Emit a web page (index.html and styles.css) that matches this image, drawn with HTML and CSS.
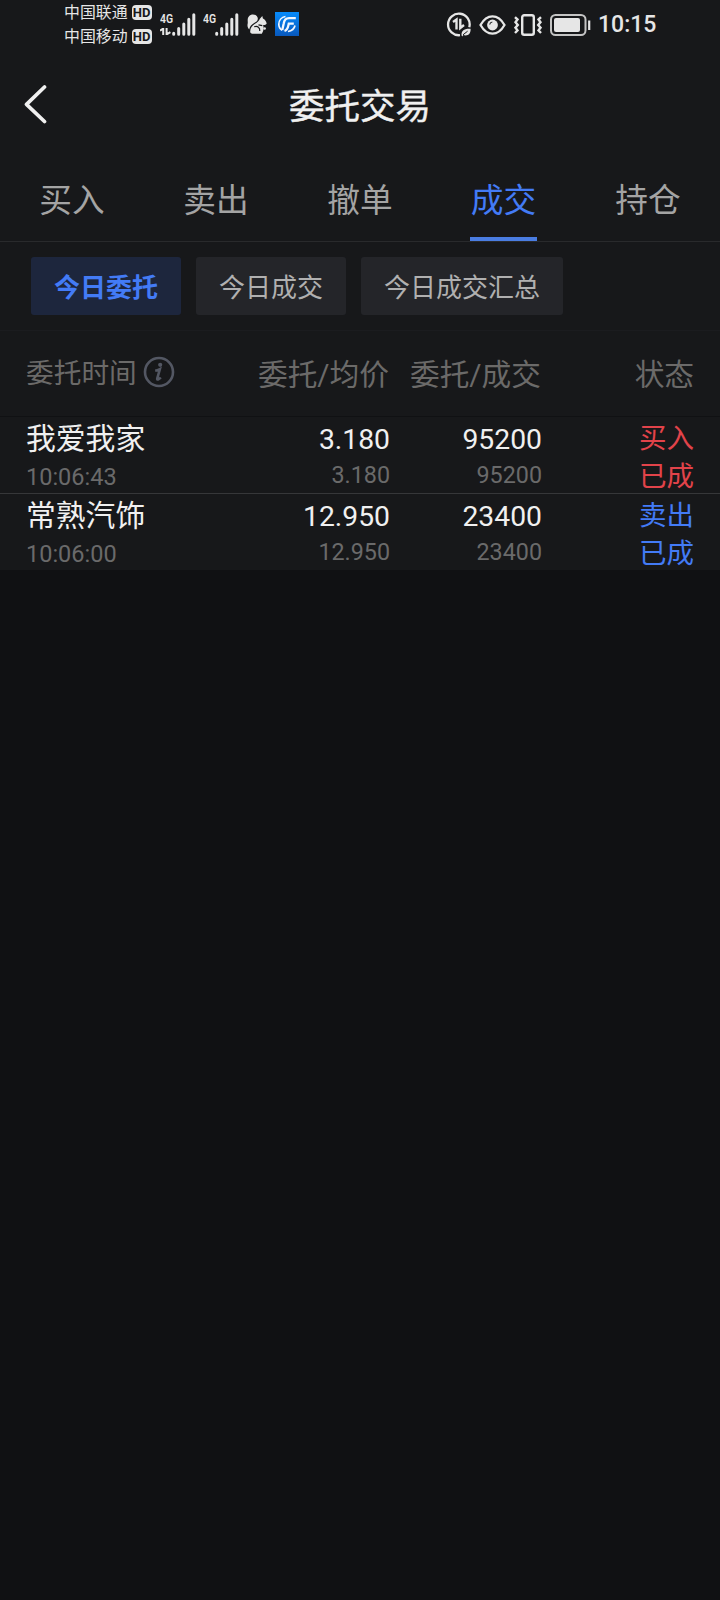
FILE: index.html
```html
<!DOCTYPE html>
<html lang="zh-CN">
<head>
<meta charset="utf-8">
<title>委托交易</title>
<link rel="stylesheet" href="styles.css">
</head>
<body>
<div class="statusbar">
  <div class="carriers">
    <div class="carrier"><span>中国联通</span><b class="hd">HD</b></div>
    <div class="carrier"><span>中国移动</span><b class="hd">HD</b></div>
  </div>
  <div class="signal">
    <div class="net"><span>4G</span>
      <svg width="11" height="7" viewBox="0 0 11 7"><path d="M0 2.600 3.200 .6V7M6.600 0V6.400L10.400 4.200" fill="none" stroke="#e6e6e6" stroke-width="2"/></svg>
    </div>
    <svg class="bars" width="24" height="23" viewBox="0 0 24 23"><path d="M1.700 20.200V21.200M6.700 15.500V21.200M11.800 11V21.200M16.800 6.200V21.200M21.800 1.700V21.200" stroke="#e6e6e6" stroke-width="3" stroke-linecap="round"/></svg>
  </div>
  <div class="signal second">
    <div class="net"><span>4G</span></div>
    <svg class="bars" width="24" height="23" viewBox="0 0 24 23"><path d="M1.700 20.200V21.200M6.700 15.500V21.200M11.800 11V21.200M16.800 6.200V21.200M21.800 1.700V21.200" stroke="#e6e6e6" stroke-width="3" stroke-linecap="round"/></svg>
  </div>
  <svg class="squirrel" width="20" height="20" viewBox="0 0 20 20">
    <path d="M2.200 15.500C.8 14 .2 12 .6 10 1 8.500.6 7.500.7 5.500.9 2.500 3 .4 5.800.4c3 0 5.200 2 5 4.500-.2 2.300-2 3-4 4.300C4.300 10.800 2.800 12.500 2.200 15.500z" fill="#e6e6e6"/>
    <path d="M3.200 18.300C3 14 5 11.500 8 9.700c2.500-1.500 4-2.700 4.900-5L15.300 2l.6 2.400c2 .8 3.200 2.600 3.800 5-.8 1.400-2.100 1.700-3.600 1.600.8 2.500.6 5.800-1.300 8.700H5.200c-.9 0-1.600-.5-2-1.400z" fill="#e6e6e6"/>
    <path d="M7.200 12.800c3.500-1.200 5.800.8 5.600 4.200M11.500 10.800l3.800.8" fill="none" stroke="#17181a" stroke-width="1.200"/>
    <circle cx="17.600" cy="14.500" r="1.300" fill="#e6e6e6"/>
  </svg>
  <svg class="app" width="24" height="24" viewBox="0 0 24 24">
    <defs><linearGradient id="sky" x1="0" y1="0" x2="0" y2="1"><stop offset="0" stop-color="#078bfb"/><stop offset="1" stop-color="#0858bd"/></linearGradient></defs>
    <rect width="24" height="24" fill="url(#sky)"/>
    <path d="M10.500 4.500C6.500 5.200 3.800 8.500 3.800 12.300c0 2.800 1.300 4.800 3.400 6.100M13 19.500c3.800-.6 6.300-2.700 7-6" fill="none" stroke="#f2f7ff" stroke-width="1.700"/>
    <path d="M20.800 6.200H14C10.500 6.200 9.300 8 8.700 11.500L7.300 18" fill="none" stroke="#f2f7ff" stroke-width="2.300"/>
    <path d="M18.800 11.600H13.800C12.900 15.500 12.800 18 9.500 19" fill="none" stroke="#f2f7ff" stroke-width="2.300"/>
  </svg>
  <div class="right">
    <svg width="25" height="25" viewBox="0 0 25 25">
      <path d="M23.300 15.200A10.800 10.800 0 1 0 14 23.200" fill="none" stroke="#e6e6e6" stroke-width="2.300"/>
      <path d="M7 10 10.500 7.500V17.500M14.300 6.800V16L18 13" fill="none" stroke="#e6e6e6" stroke-width="2.400"/>
      <path d="M15.600 23.500c-.6-4.600 2.600-7.300 9-6.800.3 5-2.800 7.800-7.200 6.300l-1.200 1.500z" fill="#e6e6e6"/>
      <path d="M17 22.800l4.600-3.600" stroke="#17181a"/>
    </svg>
    <svg class="eye" width="27" height="20" viewBox="0 0 27 20">
      <path d="M1.500 10C8-1.500 19-1.500 25.500 10 19 21.500 8 21.500 1.500 10z" fill="none" stroke="#e6e6e6" stroke-width="2.300"/>
      <circle cx="13.500" cy="10" r="5.400" fill="#e6e6e6"/><path d="M10.700 9.500A3 3 0 0 1 13.300 7" fill="none" stroke="#17181a" stroke-width="1.100"/>
    </svg>
    <svg class="vibrate" width="28" height="22" viewBox="0 0 28 22">
      <rect x="8.200" y="1.200" width="11.600" height="19.600" rx="2" fill="none" stroke="#e6e6e6" stroke-width="2.400"/>
      <path d="M1 3.200 3.500 5.500 1.500 8.200 3.800 11 1.500 13.700 3.500 16.400 1 19M27 3.200 24.500 5.500 26.500 8.200 24.200 11 26.500 13.700 24.500 16.400 27 19" fill="none" stroke="#e6e6e6" stroke-width="2.400"/>
    </svg>
    <svg class="battery" width="41" height="22" viewBox="0 0 41 22">
      <rect x="1" y="1" width="34.500" height="20" rx="4.500" fill="none" stroke="#c4c4c4" stroke-width="2"/>
      <rect x="4" y="4" width="26" height="14" rx="2" fill="#e6e6e6"/>
      <path d="M39.200 6.500V16" stroke="#e6e6e6" stroke-width="2.200"/>
    </svg>
    <span class="clock">10:15</span>
  </div>
</div>

<header class="titlebar">
  <svg class="back" width="24" height="40" viewBox="0 0 24 40"><path d="M20.500 2 2.500 19.300 20.500 36.500" fill="none" stroke="#f0f0f0" stroke-width="3.700" stroke-linecap="round" stroke-linejoin="round"/></svg>
  <h1>委托交易</h1>
</header>

<nav class="tabs">
  <span class="tab">买入</span>
  <span class="tab">卖出</span>
  <span class="tab">撤单</span>
  <span class="tab active">成交</span>
  <span class="tab">持仓</span>
</nav>

<div class="filters">
  <span class="chip on">今日委托</span>
  <span class="chip">今日成交</span>
  <span class="chip">今日成交汇总</span>
</div>

<div class="grid head">
  <div class="time"><span>委托时间</span>
    <svg width="32" height="32" viewBox="0 0 32 32"><circle cx="16" cy="16" r="14" fill="none" stroke="#535763" stroke-width="2.600"/><circle cx="17.200" cy="8.800" r="2.100" fill="#535763"/><path d="M12.200 14.800c2-.4 3.300-1 4.700-1.700l-2.700 9.600c-.4 1.500 1.600 1 3.600-1.200" fill="none" stroke="#535763" stroke-width="2.600"/></svg>
  </div>
  <div class="pair">委托/均价</div>
  <div class="pair">委托/成交</div>
  <div>状态</div>
</div>

<div class="grid row">
  <div class="cell name"><span>我爱我家</span><small>10:06:43</small></div>
  <div class="cell num"><span>3.180</span><small>3.180</small></div>
  <div class="cell num"><span>95200</span><small>95200</small></div>
  <div class="cell state buy"><span>买入</span><span>已成</span></div>
</div>
<div class="grid row last">
  <div class="cell name"><span>常熟汽饰</span><small>10:06:00</small></div>
  <div class="cell num"><span>12.950</span><small>12.950</small></div>
  <div class="cell num"><span>23400</span><small>23400</small></div>
  <div class="cell state sell"><span>卖出</span><span>已成</span></div>
</div>
</body>
</html>
```
FILE: styles.css
```css
* { box-sizing: border-box; }
body {
  margin: 0;
  width: 720px;
  min-height: 1600px;
  background: #101113;
  color: #f0f0f0;
  font-family: Roboto, "Noto Sans CJK SC", sans-serif;
}
svg { display: block; flex: none; }

.statusbar {
  display: flex;
  align-items: flex-start;
  height: 50px;
  padding-left: 64px;
  background: #17181a;
  color: #e6e6e6;
}
.carriers { width: 96px; }
.carrier { display: flex; align-items: center; gap: 4px; height: 24px; font-size: 15.9px; line-height: 25px; white-space: nowrap; }
.hd {
  width: 20px;
  height: 15px;
  margin-top: 1px;
  border-radius: 4px;
  background: #e6e6e6;
  color: #17181a;
  font-size: 13px;
  line-height: 15.5px;
  text-align: center;
}
.signal { display: flex; margin-top: 13px; width: 43px; }
.net { width: 12px; font-size: 13px; font-weight: 600; line-height: 11px; }
.net span { display: block; width: 17px; transform: scaleX(.8); transform-origin: left; }
.net svg { margin-top: 4px; }
.second { width: 44px; }
.squirrel { margin-top: 14px; }
.app { margin: 12px 0 0 8px; }
.right { display: flex; align-items: center; height: 49px; margin-left: 147px; }
.eye { margin-left: 8px; }
.vibrate { margin-left: 8px; }
.battery { margin-left: 8px; }
.clock { margin-left: 7px; font-size: 23px; font-weight: 500; line-height: 28px; padding-top: 1px; }

.titlebar { display: flex; align-items: center; height: 110px; padding: 0 24px; background: #17181a; }
.titlebar h1 { flex: 1; margin: 4px 24px 0 0; text-align: center; font-size: 35.5px; font-weight: 400; line-height: 50px; -webkit-text-stroke: .4px #f0f0f0; }

.tabs { display: grid; grid-template-columns: repeat(5, 1fr); height: 82px; border-bottom: 1px solid #292a2c; background: #17181a; }
.tab { justify-self: center; width: 67px; height: 81px; font-size: 32.7px; line-height: 82px; text-align: center; color: #a4a4a4; }
.tab.active { margin-right: 1px; color: #437bf6; border-bottom: 4px solid #4a7de2; }

.filters { display: flex; gap: 15px; height: 89px; padding: 15px 31px; border-bottom: 1px solid #1b1c1f; background: #17181a; }
.chip { height: 58px; width: 150px; border-radius: 3px; background: #242529; color: #b0b0b0; font-size: 26px; line-height: 62px; text-align: center; }
.chip:last-child { width: 202px; }
.chip.on { background: #1d263d; color: #437bf6; font-weight: 700; }

.grid { display: grid; grid-template-columns: 202px 162px 152px 152px; padding: 0 26px; background: #17181a; text-align: right; }
.head { height: 86px; border-bottom: 1px solid #101113; color: #6b6a69; font-size: 29.7px; line-height: 88px; }
.pair { padding-right: 1px; }
.time { display: flex; align-items: center; gap: 6px; height: 85px; font-size: 27.7px; white-space: nowrap; }
.time svg { margin-bottom: 3px; }
.row { height: 77px; border-bottom: 1px solid #363739; }
.row.last { height: 76px; border-bottom: 0; }
.cell { display: flex; flex-direction: column; line-height: 38px; }
.cell small { color: #6a6a6a; font-size: 23.3px; }
.name { text-align: left; }
.name span { font-size: 29.8px; line-height: 44px; }
.name small { line-height: 32px; font-size: 23.5px; }
.num { font-size: 28.3px; padding-top: 4px; }
.num span { line-height: 37px; }
.num small { line-height: 34px; }
.state { font-size: 27.5px; padding-top: 3px; }
.buy { color: #e2434a; }
.sell { color: #437bf6; }
```
